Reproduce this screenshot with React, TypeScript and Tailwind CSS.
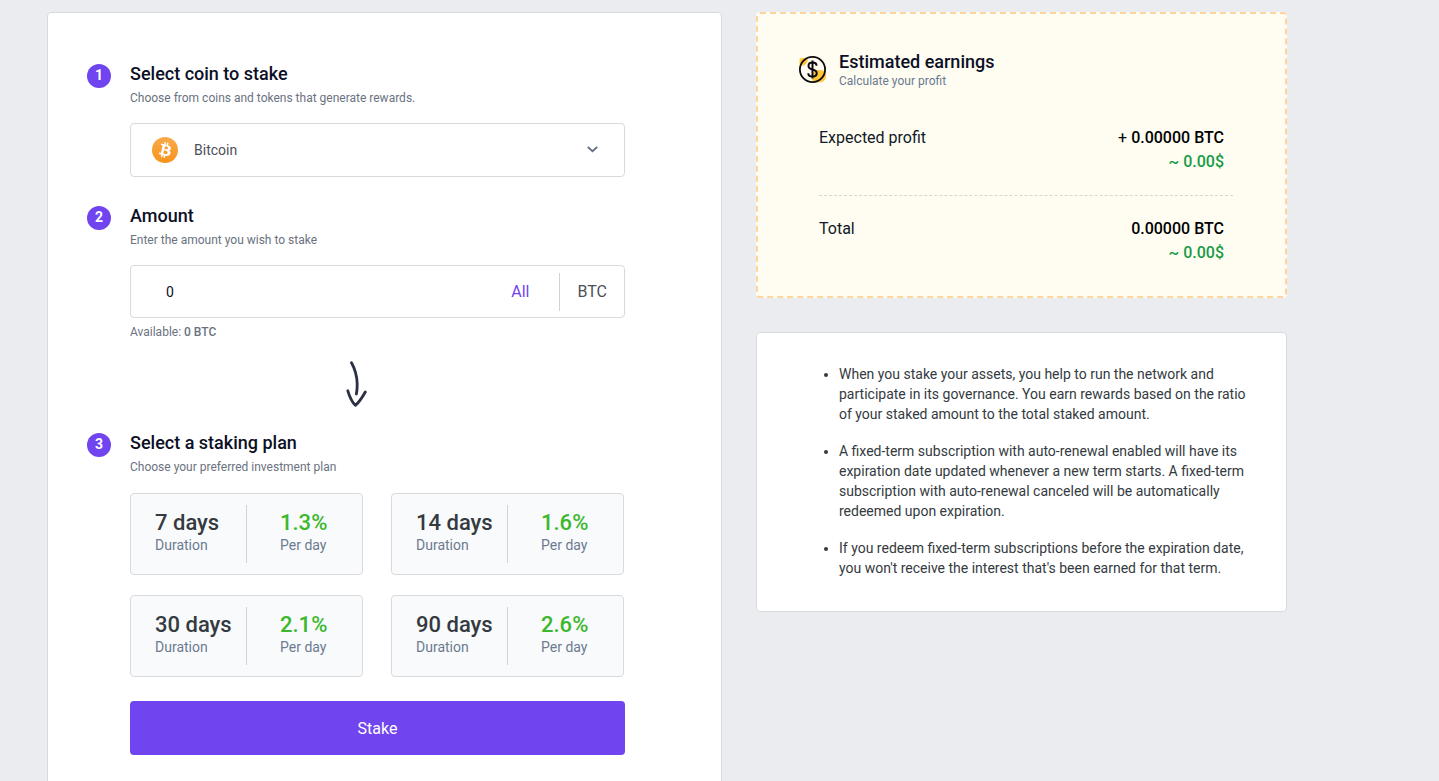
import React, { useState } from "react";

const plans = [
  { days: 7, percent: 1.3 },
  { days: 14, percent: 1.6 },
  { days: 30, percent: 2.1 },
  { days: 90, percent: 2.6 },
];

const notes = [
  "When you stake your assets, you help to run the network and participate in its governance. You earn rewards based on the ratio of your staked amount to the total staked amount.",
  "A fixed-term subscription with auto-renewal enabled will have its expiration date updated whenever a new term starts. A fixed-term subscription with auto-renewal canceled will be automatically redeemed upon expiration.",
  "If you redeem fixed-term subscriptions before the expiration date, you won't receive the interest that's been earned for that term.",
];

const BitcoinIcon = () => (
  <svg viewBox="0 0 32 32" className="size-[26px]" aria-hidden="true">
    <defs>
      <linearGradient id="btc" x1="0" y1="0" x2="0" y2="1">
        <stop offset="0" stopColor="#f9aa4b" />
        <stop offset="1" stopColor="#f7931a" />
      </linearGradient>
    </defs>
    <circle cx="16" cy="16" r="16" fill="url(#btc)" />
    <path
      fill="#fff"
      d="M23.189 14.02c.314-2.096-1.283-3.223-3.465-3.975l.708-2.84-1.728-.43-.69 2.765c-.454-.114-.92-.22-1.385-.326l.695-2.783L15.596 6l-.708 2.839c-.376-.086-.746-.17-1.104-.26l.002-.009-2.384-.595-.46 1.846s1.283.294 1.256.312c.7.175.826.638.805 1.006l-.806 3.235c.048.012.11.03.18.057l-.183-.045-1.13 4.532c-.086.212-.303.531-.793.41.018.025-1.256-.313-1.256-.313l-.858 1.978 2.25.561c.418.105.828.215 1.231.318l-.715 2.872 1.727.43.708-2.84c.472.127.93.245 1.378.357l-.706 2.828 1.728.43.715-2.866c2.948.558 5.164.333 6.097-2.333.752-2.146-.037-3.385-1.588-4.192 1.13-.26 1.98-1.003 2.207-2.538zm-3.95 5.538c-.533 2.147-4.148.986-5.32.695l.95-3.805c1.172.293 4.929.872 4.37 3.11zm.535-5.569c-.487 1.953-3.495.96-4.47.717l.86-3.45c.975.243 4.118.696 3.61 2.733z"
    />
  </svg>
);

const DollarIcon = () => (
  <svg viewBox="0 0 28 28" className="size-7 shrink-0" fill="none" aria-hidden="true">
    <path d="M2.500 3H7c1.500 0 2.200 1 1.700 2.500C8 8 6.500 10.500 3.500 10.500H.5V5c0-1.200.8-2 2-2z" fill="#ffc738" />
    <path d="M15 16.500c2-2 6-1.500 9-1 2.500.5 3 2 3 4.500 0 4.800-2.500 7.500-8 7.500-3 0-5-.8-6-2.500z" fill="#ffc738" />
    <circle cx="13.500" cy="14.500" r="12.600" stroke="#0b0b0b" strokeWidth="1.800" />
    <path
      d="M13.500 5.500v18M17.500 10.800c0-2-1.600-3.200-4-3.200s-4 1.200-4 3.300 1.500 3 4 3.600 4.200 1.500 4.200 3.700-1.800 3.400-4.200 3.400-4.200-1.200-4.200-3.400"
      stroke="#0b0b0b"
      strokeWidth="2"
    />
  </svg>
);

const ArrowDown = () => (
  <svg
    viewBox="0 0 21 46"
    className="h-[46px] w-[21px]"
    fill="none"
    stroke="#2b3044"
    strokeWidth="2.800"
    strokeLinecap="round"
    strokeLinejoin="round"
    aria-hidden="true"
  >
    <path d="M5.500 1.800C9 8 11 16 11.200 23c0 4-.2 7-.8 10" />
    <path d="M1.800 29.800C3.500 35.500 6 41 9.400 44.300 13.500 41 16.500 36 19.300 31" />
  </svg>
);

const Step = ({
  index,
  title,
  subtitle,
  children,
}: {
  index: number;
  title: string;
  subtitle: string;
  children: React.ReactNode;
}) => (
  <section className="flex gap-[19px]">
    <span className="mt-1 flex size-6 shrink-0 justify-center rounded-full bg-[#7044ee] text-sm leading-[23px] font-bold text-white">
      {index}
    </span>
    <div className="min-w-0 flex-1">
      <h2 className="text-lg leading-7 font-medium text-[#0c1026]">{title}</h2>
      <p className="mt-0.5 text-xs text-[#6b7280]">{subtitle}</p>
      {children}
    </div>
  </section>
);

const EarningRow = ({ label, sign }: { label: string; sign?: string }) => (
  <div className="flex justify-between pr-[9px] leading-6">
    <span className="text-[#111827]">{label}</span>
    <div className="text-right font-medium">
      <p className="text-black">
        {sign && <span className="font-normal">{sign} </span>}
        0.00000 BTC
      </p>
      <p className="text-[#169c46]">~ 0.00$</p>
    </div>
  </div>
);

const App = () => {
  const [coin, setCoin] = useState<string>("Bitcoin");
  const [amount, setAmount] = useState<string>("0");
  const [plan, setPlan] = useState<number>();

  return (
    <main className="grid min-h-screen grid-cols-[675fr_531fr] items-start gap-[34px] bg-[#ebecf0] pt-3 pr-[152px] pl-[47px] font-[Roboto,sans-serif]">
      <div className="rounded border border-[#d8dadd] bg-white pt-[47px] pr-24 pb-12 pl-[39px]">
        <Step
          index={1}
          title="Select coin to stake"
          subtitle="Choose from coins and tokens that generate rewards."
        >
          <div className="relative mt-[17px]">
            <span className="pointer-events-none absolute inset-y-0 left-[22px] flex items-center">
              <BitcoinIcon />
            </span>
            <select
              aria-label="Coin"
              value={coin}
              onChange={(e) => setCoin(e.target.value)}
              className="block h-[54px] w-full appearance-none rounded border border-[#d8dadd] bg-white pl-[63px] text-sm text-[#4b5058]"
            >
              <option>Bitcoin</option>
            </select>
            <span className="pointer-events-none absolute inset-y-0 right-[27px] flex items-center">
              <svg viewBox="0 0 11 8" className="h-2 w-[11px]" fill="none" stroke="#667085" strokeWidth="1.800" aria-hidden="true">
                <path d="M.8 1L5.500 5.200l4.700-4.200" />
              </svg>
            </span>
          </div>
        </Step>

        <div className="mt-[25px]">
          <Step index={2} title="Amount" subtitle="Enter the amount you wish to stake">
            <div className="mt-[17px] flex h-[53px] items-center rounded border border-[#d8dadd]">
              <input
                aria-label="Amount"
                type="text"
                value={amount}
                onChange={(e) => setAmount(e.target.value)}
                className="min-w-0 flex-1 pl-[35px] text-sm text-[#0c1026] outline-none"
              />
              <button
                type="button"
                onClick={() => setAmount("0")}
                className="pr-[29px] text-[#7044ee]"
              >
                All
              </button>
              <span className="flex h-[38px] items-center border-l border-[#d0d3d6] pr-[17px] pl-[18px] text-[#4b5058]">
                BTC
              </span>
            </div>
            <p className="mt-1.5 text-xs text-[#6b7280]">
              Available: <span className="font-medium">0 BTC</span>
            </p>
          </Step>
        </div>

        <div className="mt-[21px] mb-[22px] flex justify-center">
          <ArrowDown />
        </div>

        <Step index={3} title="Select a staking plan" subtitle="Choose your preferred investment plan">
          <div className="mt-[18px] grid grid-cols-2 gap-x-7 gap-y-5 pr-px">
            {plans.map((item) => (
              <button
                key={item.days}
                type="button"
                aria-pressed={plan === item.days}
                onClick={() => setPlan(item.days)}
                className="flex h-[82px] rounded border border-[#d8dadd] bg-[#f9fafc] py-[11px] pl-6 text-left text-sm leading-4 text-[#6b7a90] aria-pressed:border-[#7044ee]"
              >
                <span className="h-full w-[92px] border-r border-[#d0d3d6] pt-1">
                  <span className="block text-[22px] leading-7 font-medium whitespace-nowrap text-[#343a40]">
                    {item.days} days
                  </span>
                  Duration
                </span>
                <span className="pt-1 pl-[33px]">
                  <span className="block text-[22px] leading-7 font-medium text-[#3bb82d]">
                    {item.percent}%
                  </span>
                  Per day
                </span>
              </button>
            ))}
          </div>
          <button
            type="button"
            className="mt-6 h-[54px] w-full rounded bg-[#7044ee] pt-0.5 text-white"
          >
            Stake
          </button>
        </Step>
      </div>

      <div className="flex flex-col gap-[34px]">
        <section className="rounded border-2 border-dashed border-[#ffd59e] bg-[#fffdf2] pt-9 pr-[52px] pb-[31px] pl-[41px]">
          <div className="flex items-center gap-3">
            <DollarIcon />
            <div>
              <h2 className="text-lg leading-6 font-medium text-[#0c1026]">Estimated earnings</h2>
              <p className="text-xs leading-[14px] text-[#6b7a90]">Calculate your profit</p>
            </div>
          </div>
          <div className="mt-[38px] pl-5">
            <EarningRow label="Expected profit" sign="+" />
            <hr className="my-[21px] border-dashed border-[#d4d6d8]" />
            <EarningRow label="Total" />
          </div>
        </section>

        <section className="rounded border border-[#d8dadd] bg-white pt-[31px] pr-10 pb-[33px] pl-[82px]">
          <ul className="flex list-disc flex-col gap-[17px] text-sm text-[#343a40]">
            {notes.map((note) => (
              <li key={note}>{note}</li>
            ))}
          </ul>
        </section>
      </div>
    </main>
  );
};

export default App;
